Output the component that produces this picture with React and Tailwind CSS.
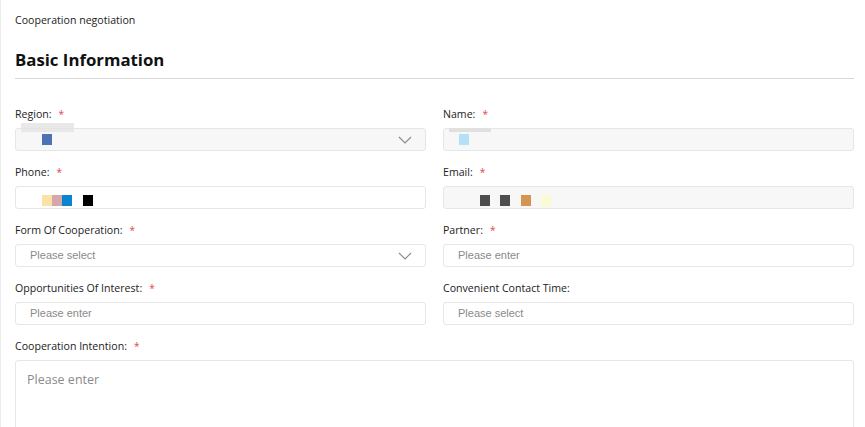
import React from "react";

const Label = ({ text, required }) => (
  <div className="h-[14px] mb-[7px] flex items-center text-[10.6px] leading-[14px] text-[#222]">
    <span>{text}</span>
    {required && <span className="ml-[7px] text-[#e0454f] text-[10px]">*</span>}
  </div>
);

const Chevron = () => (
  <svg width="14" height="8" viewBox="0 0 14 8" fill="none" className="text-[#888]">
    <path d="M1 1l6 6 6-6" stroke="currentColor" strokeWidth="1.1" />
  </svg>
);

const Box = ({ children, disabled, select }) => (
  <div
    className={`relative h-[23px] rounded-[3px] border border-[#e6e6e6] flex items-center justify-between pl-[14px] pr-[13px] ${
      disabled ? "bg-[#f7f7f7]" : "bg-white"
    }`}
  >
    <div className="flex items-center h-full">{children}</div>
    {select && <Chevron />}
  </div>
);

const Placeholder = ({ text }) => (
  <span className="text-[11px] text-[#8a8a8a] font-['Liberation_Sans',Arial,sans-serif]">{text}</span>
);

const Field = ({ label, required, children }) => (
  <div className="mb-[14px]">
    <Label text={label} required={required} />
    {children}
  </div>
);

const Sq = ({ c, ml = 0 }) => (
  <span className={`inline-block w-[10px] h-[11px] ${c}`} style={{ marginLeft: ml }} />
);

export default function App() {
  return (
    <div className="w-[865px] h-[427px] overflow-hidden bg-white border-l border-[#ececec] font-['Open_Sans','Noto_Sans',sans-serif]">
      <div className="pl-[14px] pr-[11px]">
        <div className="pt-[13px] h-[48px] text-[10.6px] leading-[14px] text-[#222]">Cooperation negotiation</div>
        <h1 className="h-[24px] text-[16.8px] leading-[24px] font-bold text-[#111]">Basic Information</h1>
        <div className="mt-[6px] h-px bg-[#d9d9d9]" />

        <div className="mt-[28px] grid grid-cols-2 gap-x-[17px]">
          <Field label="Region:" required>
            <Box disabled select>
              <span className="absolute left-[5px] top-[-6px] w-[53px] h-[9px] bg-[#e4e4e4] opacity-80" />
              <Sq c="bg-[#4f72b6]" ml={12} />
            </Box>
          </Field>
          <Field label="Name:" required>
            <Box disabled>
              <span className="absolute left-[5px] top-[-1px] w-[42px] h-[4px] bg-[#e0e0e0]" />
              <Sq c="bg-[#b4e1f8]" ml={1} />
            </Box>
          </Field>

          <Field label="Phone:" required>
            <Box>
              <span className="flex items-center mt-[6px] ml-[12px]">
                <Sq c="bg-[#fde2a6]" />
                <Sq c="bg-[#d6a7aa]" />
                <Sq c="bg-[#0b83cf]" />
                <Sq c="bg-black" ml={11} />
              </span>
            </Box>
          </Field>
          <Field label="Email:" required>
            <Box disabled>
              <span className="flex items-center mt-[5px] ml-[22px]">
                <Sq c="bg-[#4d4d4d]" />
                <Sq c="bg-[#4d4d4d]" ml={10} />
                <Sq c="bg-[#d3954f]" ml={11} />
                <Sq c="bg-[#fbfad2]" ml={10} />
              </span>
            </Box>
          </Field>

          <Field label="Form Of Cooperation:" required>
            <Box select>
              <Placeholder text="Please select" />
            </Box>
          </Field>
          <Field label="Partner:" required>
            <Box>
              <Placeholder text="Please enter" />
            </Box>
          </Field>

          <Field label="Opportunities Of Interest:" required>
            <Box>
              <Placeholder text="Please enter" />
            </Box>
          </Field>
          <Field label="Convenient Contact Time:">
            <Box>
              <Placeholder text="Please select" />
            </Box>
          </Field>
        </div>

        <div>
          <Label text="Cooperation Intention:" required />
          <div className="h-[90px] rounded-[3px] border border-[#e6e6e6] bg-white pl-[11px] pt-[5px]">
            <span className="text-[12.5px] text-[#8a8a8a]">Please enter</span>
          </div>
        </div>
      </div>
    </div>
  );
}
